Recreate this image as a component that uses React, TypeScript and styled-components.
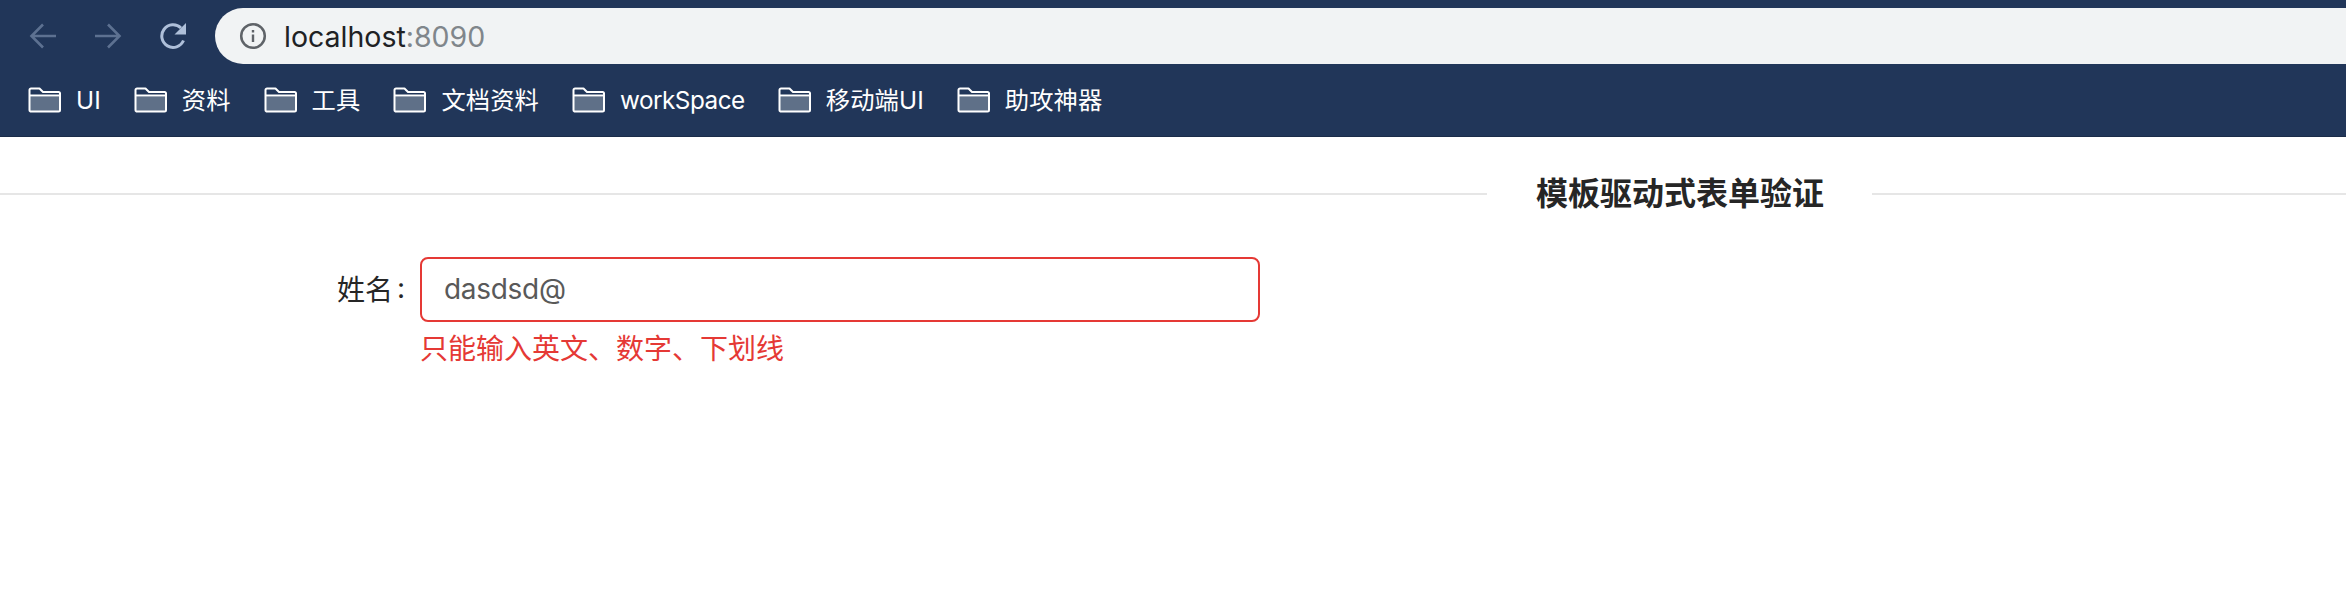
import styled, { createGlobalStyle } from "styled-components"

/* --------------------------------------------- CSS -------------------------------------------- */
const FONT = `Inter, "Noto Sans CJK SC", "Noto Sans", sans-serif`

const GlobalStyle = createGlobalStyle`
    html, body{
        margin: 0;
        padding: 0;
        background: #fff;
        font-family: ${FONT};
    }
    *{ box-sizing: border-box; }
`

const Chrome = styled.header`
    height: 137px;
    background-color: #213659;
    border-bottom: 1px solid #1b2c49;
    padding-top: 8px;
`

const ToolRow = styled.div`
    display: flex;
    align-items: center;
    height: 56px;
`

const NavIcons = styled.div`
    display: flex;
    align-items: center;
    gap: 37px;
    width: 215px;
    padding-left: 29px;
`

const Address = styled.div`
    flex: 1;
    height: 56px;
    display: flex;
    align-items: center;
    gap: 17px;
    padding-left: 24px;
    background-color: #f1f3f4;
    border-radius: 28px 0 0 28px;
    font-size: 28.5px;
    letter-spacing: 0;
    color: #202124;

    span{ color: #80868b; }
`

const Bookmarks = styled.nav`
    display: flex;
    align-items: center;
    gap: 33px;
    height: 72px;
    padding-left: 28px;
`

const Bookmark = styled.div<{ $tight?: boolean }>`
    display: flex;
    align-items: center;
    gap: 15px;
    color: #fff;
    font-size: 24.3px;
    letter-spacing: ${({ $tight }) => ($tight ? "-0.5px" : "0.1px")};
    line-height: 30px;
    white-space: nowrap;
`

const TitleRow = styled.div`
    display: flex;
    align-items: center;
    height: 114px;
`

const Line = styled.div<{ $grow?: boolean }>`
    flex: ${({ $grow }) => ($grow ? "1" : "0 0 474px")};
    height: 2px;
    background-color: #e6e6e6;
`

const Title = styled.h2`
    margin: 0;
    padding: 0 48px 0 49px;
    font-size: 32px;
    line-height: 44px;
    font-weight: 700;
    color: #262626;
    white-space: nowrap;
`

const FormRow = styled.div`
    display: grid;
    grid-template-columns: 420px 840px;
    margin-top: 6px;
`

const Label = styled.label`
    height: 65px;
    padding: 0 15px 3px 0;
    display: flex;
    align-items: center;
    justify-content: flex-end;
    font-size: 28px;
    color: #262626;
`

const Colon = styled.span`
    margin-left: 4px;
`

const Input = styled.input`
    width: 100%;
    height: 65px;
    padding: 0 22px 2px;
    border: 2px solid #e53935;
    border-radius: 8px;
    outline: none;
    font-family: ${FONT};
    font-size: 28px;
    letter-spacing: -0.3px;
    color: #595959;
    background: #fff;
`

const ErrorText = styled.div`
    grid-column: 2;
    margin-top: 7px;
    font-size: 28px;
    line-height: 40px;
    color: #e53935;
`

/* ------------------------------------------- BOOKMARKS ----------------------------------------- */
const bookmarks = ["UI", "资料", "工具", "文档资料", "workSpace", "移动端UI", "助攻神器"]

/* -------------------------------------------- ICONS -------------------------------------------- */
function FolderIcon() {
    return (
        <svg width="33" height="26" viewBox="0 0 33 26" fill="none">
            <path d="M2 9.500h29V23a1.500 1.500 0 0 1-1.500 1.500h-26A1.500 1.500 0 0 1 2 23z" fill="#5f7088" />
            <path
                d="M1.500 3A1.500 1.500 0 0 1 3 1.500h8.500l3.500 3.500h15.500A1.500 1.500 0 0 1 32 6.500V23a1.500 1.500 0 0 1-1.500 1.500h-27A1.500 1.500 0 0 1 1.500 23zM1.500 8.500h30.500"
                stroke="#fff"
                strokeWidth="2"
                strokeLinejoin="round"
            />
        </svg>
    )
}

function BackIcon() {
    return (
        <svg width="28" height="28" viewBox="0 0 28 28" fill="none" stroke="#5d7191" strokeWidth="2.600">
            <path d="M27 14H3M14 2.500 2.500 14 14 25.500" />
        </svg>
    )
}

function ForwardIcon() {
    return (
        <svg width="28" height="28" viewBox="0 0 28 28" fill="none" stroke="#5d7191" strokeWidth="2.600">
            <path d="M1 14h24M14 2.500 25.500 14 14 25.500" />
        </svg>
    )
}

function ReloadIcon() {
    return (
        <svg width="28" height="28" viewBox="0 0 28 28" fill="none">
            <path d="M24.500 18.500A11.300 11.300 0 1 1 22 6" stroke="#aebfd9" strokeWidth="3" />
            <path d="M27 1v11.500H15.500z" fill="#aebfd9" />
        </svg>
    )
}

function InfoIcon() {
    return (
        <svg width="28" height="28" viewBox="0 0 28 28" fill="none">
            <circle cx="14" cy="14" r="11.800" stroke="#5f6368" strokeWidth="2.500" />
            <path d="M12.800 12.500h2.400v7.500h-2.400zM12.800 8h2.400v2.400h-2.400z" fill="#5f6368" />
        </svg>
    )
}

/* ------------------------------------------ COMPONENT ----------------------------------------- */
export default function App() {
    return (
        <>
            <GlobalStyle />
            <Chrome>
                <ToolRow>
                    <NavIcons>
                        <BackIcon />
                        <ForwardIcon />
                        <ReloadIcon />
                    </NavIcons>
                    <Address>
                        <InfoIcon />
                        <div>localhost<span>:8090</span></div>
                    </Address>
                </ToolRow>
                <Bookmarks>
                    {bookmarks.map(item => (
                        <Bookmark key={item} $tight={item === "workSpace"}>
                            <FolderIcon />
                            {item}
                        </Bookmark>
                    ))}
                </Bookmarks>
            </Chrome>
            <TitleRow>
                <Line $grow />
                <Title>模板驱动式表单验证</Title>
                <Line />
            </TitleRow>
            <FormRow>
                <Label>姓名<Colon>:</Colon></Label>
                <Input defaultValue="dasdsd@" />
                <ErrorText>只能输入英文、数字、下划线</ErrorText>
            </FormRow>
        </>
    )
}
